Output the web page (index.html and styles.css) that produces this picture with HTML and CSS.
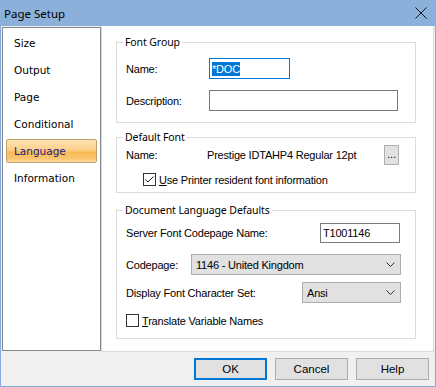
FILE: index.html
```html
<!DOCTYPE html>
<html lang="en">
<head>
    <meta charset="UTF-8">
    <title>Page Setup</title>
    <link rel="stylesheet" href="styles.css">
</head>
<body>
    <div class="window">
        <div class="titlebar">
            <span class="title">Page Setup</span>
            <svg class="close" width="12" height="12" viewBox="0 0 12 12">
                <path d="M0.5 0.5 L11.5 11.5 M11.5 0.5 L0.5 11.5" stroke="#111" stroke-width="1" fill="none"/>
            </svg>
        </div>

        <div class="main">
            <ul class="nav">
                <li>Size</li>
                <li>Output</li>
                <li>Page</li>
                <li>Conditional</li>
                <li class="active">Language</li>
                <li>Information</li>
            </ul>

            <div class="panel">
                <fieldset class="group group-font">
                    <legend>Font Group</legend>
                    <div class="row row-name">
                        <span class="lbl lbl-name">Name:</span>
                        <div class="textbox textbox-name focused"><span class="sel">*DOC</span></div>
                    </div>
                    <div class="row row-desc">
                        <span class="lbl lbl-name">Description:</span>
                        <div class="textbox textbox-desc"></div>
                    </div>
                </fieldset>

                <fieldset class="group group-default">
                    <legend>Default Font</legend>
                    <div class="row row-fontname">
                        <span class="lbl lbl-fontname">Name:</span>
                        <span class="fontname">Prestige IDTAHP4 Regular 12pt</span>
                        <button class="dots">...</button>
                    </div>
                    <div class="row row-check row-resident">
                        <span class="check">
                            <svg width="11" height="11" viewBox="0 0 11 11">
                                <path d="M1.5 5.5 L4 8 L9.5 2.5" stroke="#222" stroke-width="1" fill="none"/>
                            </svg>
                        </span>
                        <span><u>U</u>se Printer resident font information</span>
                    </div>
                </fieldset>

                <fieldset class="group group-lang">
                    <legend>Document Language Defaults</legend>
                    <div class="row row-server">
                        <span class="lbl lbl-server">Server Font Codepage Name:</span>
                        <div class="textbox textbox-server">T1001146</div>
                    </div>
                    <div class="row row-codepage">
                        <span class="lbl lbl-codepage">Codepage:</span>
                        <div class="combo combo-codepage">
                            <span>1146 - United Kingdom</span>
                            <svg width="9" height="5" viewBox="0 0 9 5"><path d="M0.5 0.5 L4.5 4.5 L8.5 0.5" stroke="#333" fill="none"/></svg>
                        </div>
                    </div>
                    <div class="row row-charset">
                        <span class="lbl lbl-charset">Display Font Character Set:</span>
                        <div class="combo combo-charset">
                            <span>Ansi</span>
                            <svg width="9" height="5" viewBox="0 0 9 5"><path d="M0.5 0.5 L4.5 4.5 L8.5 0.5" stroke="#333" fill="none"/></svg>
                        </div>
                    </div>
                    <div class="row row-check row-translate">
                        <span class="check"></span>
                        <span><u>T</u>ranslate Variable Names</span>
                    </div>
                </fieldset>
            </div>
        </div>

        <div class="footer">
            <button class="btn btn-default">OK</button>
            <button class="btn">Cancel</button>
            <button class="btn">Help</button>
        </div>
    </div>
</body>
</html>
```

FILE: styles.css
```css
/* Page Setup dialog */
body {
    margin: 0;
    font-family: "Liberation Sans", Arial, sans-serif;
    font-size: 11px;
    letter-spacing: -0.2px;
    color: #000;
}

.window {
    width: 436px;
    height: 387px;
    box-sizing: border-box;
    border: 1px solid #86AADB;
    border-top: none;
    background-color: #F0F0F0;
    display: flex;
    flex-direction: column;
}

.titlebar {
    flex-shrink: 0;
    height: 26px;
    margin: 0 -1px;
    padding: 0 9px 0 4px;
    background-color: #8BB1DA;
    display: flex;
    align-items: center;
    justify-content: space-between;
}

.titlebar .title {
    font-family: "Noto Sans", sans-serif;
    font-size: 11.5px;
    letter-spacing: 0;
}

.main {
    flex-shrink: 0;
    height: 326px;
    display: flex;
}

/* left navigation list */
.nav {
    list-style: none;
    width: 99px;
    box-sizing: border-box;
    margin: 1px 0 1px 1px;
    padding: 3px 3px 0;
    border: 1px solid #828790;
    background-color: #fff;
    font-family: "DejaVu Sans", sans-serif;
    font-size: 10.5px;
    letter-spacing: 0;
}

.nav li {
    height: 24px;
    box-sizing: border-box;
    margin-bottom: 3px;
    padding-left: 7px;
    border: 1px solid transparent;
    border-radius: 2px;
    display: flex;
    align-items: center;
}

.nav li.active {
    border-color: #C0A06E;
    color: #1B1B7A;
    background: linear-gradient(#FDE2B0 0%, #FBD08C 45%, #F9BA57 55%, #FAC66E 85%, #FCDCA2 100%);
}

/* right panel */
.panel {
    flex: 1;
    margin-right: 1px;
    padding-left: 14px;
    background-color: #fff;
    border: 1px solid #DADADA;
    border-top: none;
}

.group {
    box-sizing: border-box;
    width: 300px;
    min-width: 0;
    margin: 0;
    border: 1px solid #DCDCDC;
    padding: 0 9px;
}

.group legend {
    font-family: "Noto Sans", sans-serif;
    font-size: 10.5px;
    letter-spacing: -0.1px;
    line-height: 16px;
    padding: 0 2px;
    margin-left: -3px;
}

.group-font { margin-top: 8px; padding-top: 8px; padding-bottom: 11px; }
.group-default { margin-top: 6px; padding-top: 0; padding-bottom: 6px; }
.group-lang { margin-top: 9px; padding-top: 5px; padding-bottom: 11px; }

.row {
    display: flex;
    align-items: center;
    height: 21px;
}

.row-desc { margin-top: 11px; }
.row-fontname { height: 20px; }
.row-check { height: 13px; }
.row-resident { margin-top: 8px; padding-left: 17px; }
.row-server { height: 20px; }
.row-codepage { margin-top: 11px; }
.row-charset { margin-top: 7px; }
.row-translate { margin-top: 11px; }

.lbl { flex-shrink: 0; }
.lbl-name { width: 83px; }
.lbl-fontname { width: 81px; }
.lbl-server { width: 194px; }
.lbl-codepage { width: 65px; }
.lbl-charset { width: 176px; }

.textbox {
    box-sizing: border-box;
    height: 100%;
    padding-left: 2px;
    border: 1px solid #7A7A7A;
    background-color: #fff;
    display: flex;
    align-items: center;
}

.textbox.focused { border-color: #0078D7; }
.textbox-name { width: 81px; }
.textbox-desc { width: 189px; }
.textbox-server { width: 80px; }

.sel {
    background-color: #0078D7;
    color: #fff;
    line-height: 14px;
}

.fontname { flex: 1; }

.dots {
    width: 15px;
    height: 20px;
    margin-right: 7px;
    padding: 0 0 4px;
    border: 1px solid #ADADAD;
    background-color: #E1E1E1;
    font-family: "Liberation Sans", Arial, sans-serif;
    font-size: 11px;
    line-height: 1;
    display: flex;
    align-items: flex-end;
    justify-content: center;
}

.check {
    width: 13px;
    height: 13px;
    box-sizing: border-box;
    margin-right: 3px;
    border: 1px solid #333;
    background-color: #fff;
    display: flex;
}

.combo {
    box-sizing: border-box;
    height: 100%;
    padding: 0 5px 0 4px;
    border: 1px solid #ADADAD;
    background-color: #E1E1E1;
    display: flex;
    align-items: center;
    justify-content: space-between;
}

.combo-codepage { width: 210px; }
.combo-charset { width: 99px; }

/* bottom buttons */
.footer {
    flex: 1;
    display: flex;
    justify-content: flex-end;
    align-items: flex-start;
    gap: 8px;
    padding: 6px 6px 0 0;
}

.btn {
    width: 73px;
    height: 22px;
    box-sizing: border-box;
    border: 1px solid #ADADAD;
    background-color: #E1E1E1;
    font-family: "Liberation Sans", Arial, sans-serif;
    font-size: 11.5px;
    color: #000;
    padding: 0;
}

.btn-default {
    border: 2px solid #0078D7;
}
```
